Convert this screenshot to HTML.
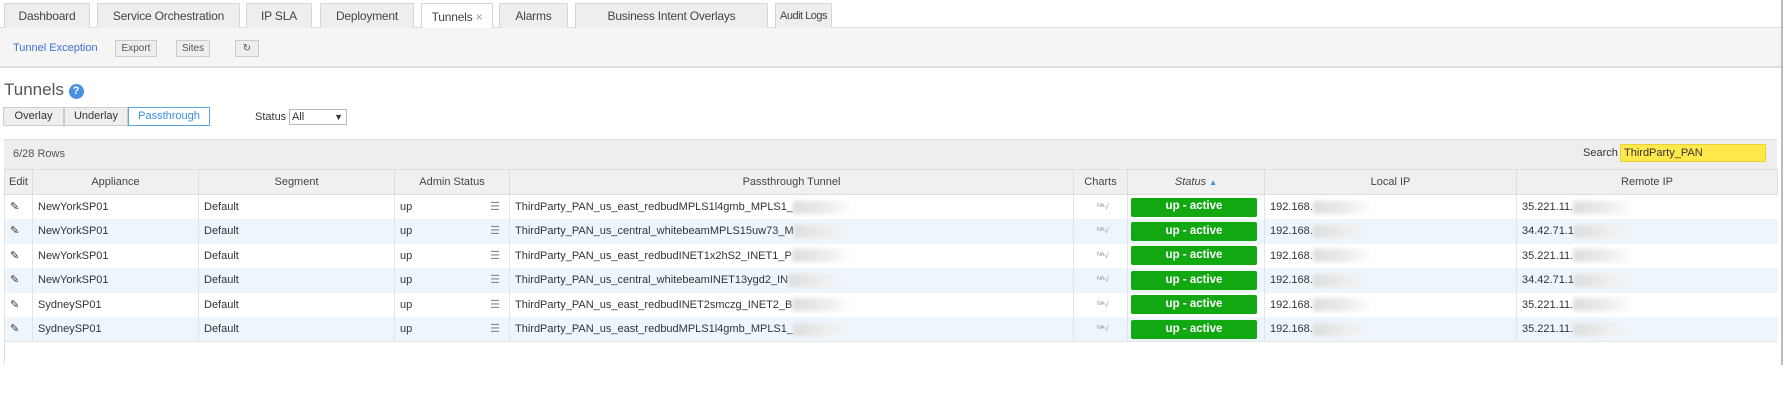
<!DOCTYPE html>
<html><head><style>
*{box-sizing:border-box;margin:0;padding:0}
body{width:1791px;height:400px;background:#fff;font-family:"Liberation Sans",Arial,sans-serif;font-size:11px;color:#333;position:relative;overflow:hidden}
.abs{position:absolute}
.tabbar{left:0;top:0;width:1782px;height:28px;background:#fff;border-bottom:1px solid #ddd}
.tab{position:absolute;top:3px;height:25px;background:#eee;border:1px solid #d6d6d6;border-bottom:none;display:flex;align-items:center;justify-content:center;font-size:12px;color:#444;white-space:nowrap;letter-spacing:-0.2px}
.tab.act{background:#fff;height:26px}
.toolbar{left:0;top:28px;width:1782px;height:40px;background:#f5f5f5;border-bottom:2px solid #ddd}
.btn{position:absolute;top:40px;height:17px;border:1px solid #ccc;background:#eee;font-size:10px;line-height:15px;text-align:center;color:#555}
.seg{position:absolute;top:107px;height:19px;border:1px solid #ccc;background:#eee;font-size:11px;line-height:17px;text-align:center;color:#333}
.panel{left:4px;top:139px;width:1773px;height:224px;border-left:1px solid #ddd}
.ptop{left:4px;top:139px;width:1773px;height:30px;background:#eee;border-top:1px solid #ddd}
table{position:absolute;left:4px;top:169px;width:1773px;border-collapse:collapse;table-layout:fixed}
th{height:25px;background:#f0f0f0;border:1px solid #ddd;font-weight:normal;font-size:11px;color:#444;vertical-align:middle}
td{height:24.5px;border-left:1px solid #e4e4e4;font-size:11px;padding:0 0 0 5px;white-space:nowrap;overflow:hidden;color:#333;vertical-align:middle;line-height:14px}
tr:nth-child(odd) td{background:#eef6fd}
.badge{background:#12a812;color:#fff;font-weight:bold;height:19px;display:flex;align-items:center;justify-content:center;border-radius:2px;width:126px;font-size:11.5px;line-height:1}
.blur{display:inline-block;width:60px;height:13px;background:linear-gradient(90deg,#ddd,#eee 60%,transparent);vertical-align:middle;filter:blur(2px)}
.menu{float:right;margin-right:9px;color:#888}
</style></head><body>
<div class="abs tabbar"></div>
<div class="tab" style="left:4px;width:86px">Dashboard</div>
<div class="tab" style="left:97px;width:143px">Service Orchestration</div>
<div class="tab" style="left:246px;width:66px">IP SLA</div>
<div class="tab" style="left:320px;width:94px">Deployment</div>
<div class="tab act" style="left:421px;width:72px">Tunnels&nbsp;<span style="color:#999">×</span></div>
<div class="tab" style="left:499px;width:69px">Alarms</div>
<div class="tab" style="left:575px;width:193px">Business Intent Overlays</div>
<div class="tab" style="left:775px;width:57px;font-size:11px;letter-spacing:-0.5px">Audit Logs</div>
<div class="abs toolbar"></div>
<div class="abs" style="left:13px;top:42px;color:#3b6fd6;font-size:11px">Tunnel Exception</div>
<div class="btn" style="left:115px;width:42px">Export</div>
<div class="btn" style="left:176px;width:34px">Sites</div>
<div class="btn" style="left:235px;width:24px">↻</div>
<div class="abs" style="left:4px;top:80px;font-size:17px;color:#555">Tunnels <span style="display:inline-block;width:15px;height:15px;border-radius:50%;background:#4a90e2;color:#fff;font-size:11px;text-align:center;line-height:15px;font-weight:bold;vertical-align:1px">?</span></div>
<div class="seg" style="left:3px;width:61px">Overlay</div>
<div class="seg" style="left:64px;width:64px">Underlay</div>
<div class="seg" style="left:128px;width:82px;background:#fff;border-color:#5aa9e6;color:#3b8fe0">Passthrough</div>
<div class="abs" style="left:255px;top:111px;font-size:11px">Status</div>
<div class="abs" style="left:289px;top:109px;width:58px;height:16px;border:1px solid #bbb;font-size:11px;line-height:14px;padding-left:2px">All<span style="position:absolute;right:3px;font-size:9px">▼</span></div>
<div class="abs panel"></div>
<div class="abs ptop"></div>
<div class="abs" style="left:13px;top:148px;font-size:11px;color:#555">6/28 Rows</div>
<div class="abs" style="left:1583px;top:147px;font-size:11px">Search</div>
<div class="abs" style="left:1620px;top:144px;width:146px;height:18px;background:#ffe94a;border:1px solid #e8d23a;font-size:11px;line-height:16px;padding-left:3px">ThirdParty_PAN</div>
<table>
<colgroup><col style="width:28px"><col style="width:166px"><col style="width:196px"><col style="width:115px"><col style="width:564px"><col style="width:54px"><col style="width:137px"><col style="width:252px"><col style="width:261px"></colgroup>
<tr><th>Edit</th><th>Appliance</th><th>Segment</th><th>Admin Status</th><th>Passthrough Tunnel</th><th>Charts</th><th><i>Status</i> <span style="color:#3b8fe0;font-size:8px">▲</span></th><th>Local IP</th><th>Remote IP</th></tr>
<tr><td>✎</td><td>NewYorkSP01</td><td>Default</td><td>up<span class="menu">☰</span></td><td>ThirdParty_PAN_us_east_redbudMPLS1l4gmb_MPLS1_<span class="blur"></span></td><td style="text-align:center;color:#999;font-size:8px">ᴺᴬ√</td><td style="padding:0 3px"><div class="badge">up - active</div></td><td>192.168.<span class="blur"></span></td><td>35.221.11.<span class="blur"></span></td></tr>
<tr><td>✎</td><td>NewYorkSP01</td><td>Default</td><td>up<span class="menu">☰</span></td><td>ThirdParty_PAN_us_central_whitebeamMPLS15uw73_M<span class="blur"></span></td><td style="text-align:center;color:#999;font-size:8px">ᴺᴬ√</td><td style="padding:0 3px"><div class="badge">up - active</div></td><td>192.168.<span class="blur"></span></td><td>34.42.71.1<span class="blur"></span></td></tr>
<tr><td>✎</td><td>NewYorkSP01</td><td>Default</td><td>up<span class="menu">☰</span></td><td>ThirdParty_PAN_us_east_redbudINET1x2hS2_INET1_P<span class="blur"></span></td><td style="text-align:center;color:#999;font-size:8px">ᴺᴬ√</td><td style="padding:0 3px"><div class="badge">up - active</div></td><td>192.168.<span class="blur"></span></td><td>35.221.11.<span class="blur"></span></td></tr>
<tr><td>✎</td><td>NewYorkSP01</td><td>Default</td><td>up<span class="menu">☰</span></td><td>ThirdParty_PAN_us_central_whitebeamINET13ygd2_IN<span class="blur"></span></td><td style="text-align:center;color:#999;font-size:8px">ᴺᴬ√</td><td style="padding:0 3px"><div class="badge">up - active</div></td><td>192.168.<span class="blur"></span></td><td>34.42.71.1<span class="blur"></span></td></tr>
<tr><td>✎</td><td>SydneySP01</td><td>Default</td><td>up<span class="menu">☰</span></td><td>ThirdParty_PAN_us_east_redbudINET2smczg_INET2_B<span class="blur"></span></td><td style="text-align:center;color:#999;font-size:8px">ᴺᴬ√</td><td style="padding:0 3px"><div class="badge">up - active</div></td><td>192.168.<span class="blur"></span></td><td>35.221.11.<span class="blur"></span></td></tr>
<tr><td>✎</td><td>SydneySP01</td><td>Default</td><td>up<span class="menu">☰</span></td><td>ThirdParty_PAN_us_east_redbudMPLS1l4gmb_MPLS1_<span class="blur"></span></td><td style="text-align:center;color:#999;font-size:8px">ᴺᴬ√</td><td style="padding:0 3px"><div class="badge">up - active</div></td><td>192.168.<span class="blur"></span></td><td>35.221.11.<span class="blur"></span></td></tr>
</table>
<div class="abs" style="left:4px;top:341px;width:1773px;height:1px;background:#e4e4e4"></div>
<div class="abs" style="left:1781px;top:0;width:2px;height:365px;background:#bbb"></div>
</body></html>
